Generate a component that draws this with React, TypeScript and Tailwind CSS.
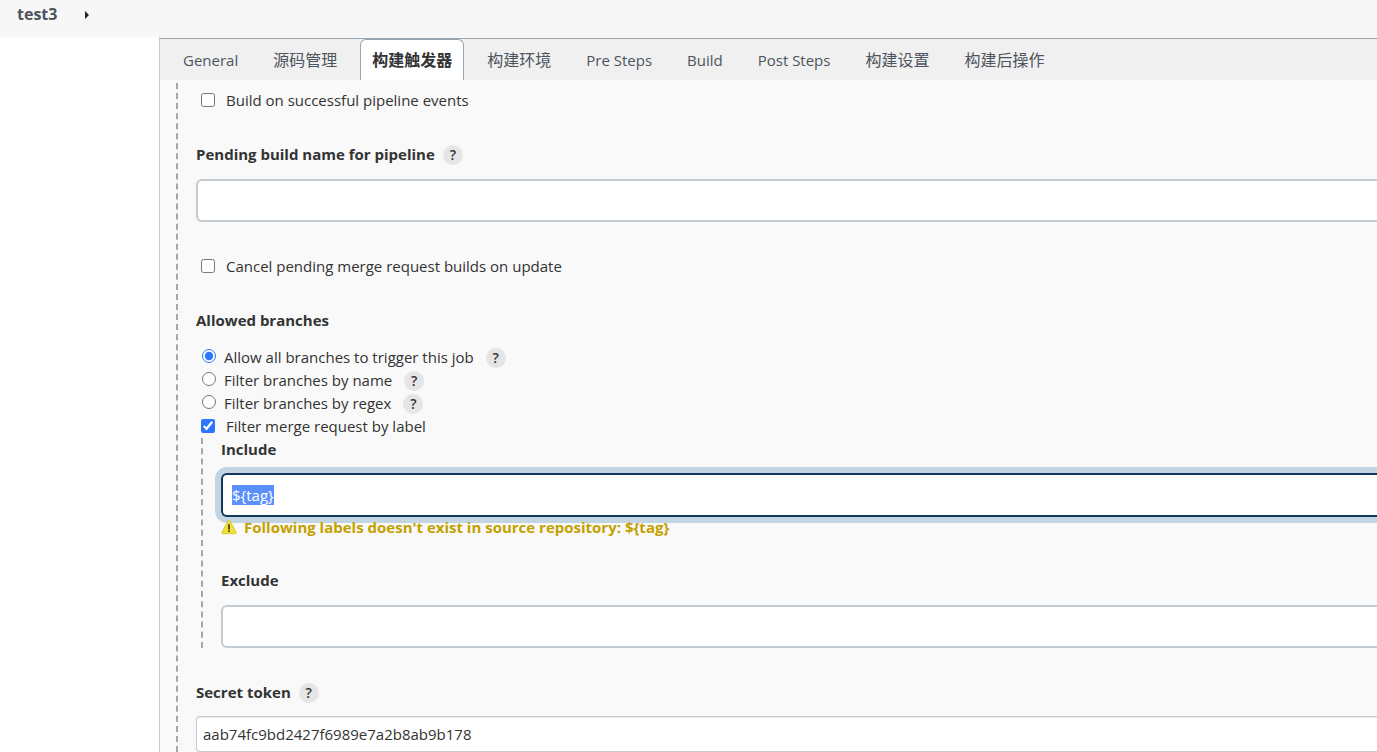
import { useEffect, useRef, useState } from "react";
import clsx from "clsx";

const tabs = [
  "General",
  "源码管理",
  "构建触发器",
  "构建环境",
  "Pre Steps",
  "Build",
  "Post Steps",
  "构建设置",
  "构建后操作",
];

const branchFilters = [
  { id: "all", label: "Allow all branches to trigger this job" },
  { id: "name", label: "Filter branches by name" },
  { id: "regex", label: "Filter branches by regex" },
];

const fieldClass =
  "block w-full rounded-l-md border-2 border-r-0 border-[#c3cad0] bg-white px-2 outline-none";

function Help({ topic }: { topic: string }) {
  return (
    <button
      type="button"
      aria-label={`Help for ${topic}`}
      className="flex size-5 items-center justify-center rounded-full bg-[#e5e5e5] text-[14px] leading-5 font-semibold text-[#333333]"
    >
      ?
    </button>
  );
}

function CheckRow({
  id,
  label,
  defaultChecked,
}: {
  id: string;
  label: string;
  defaultChecked?: boolean;
}) {
  return (
    <div className="flex h-[23px] items-center pl-[5px] font-medium">
      <input
        id={id}
        type="checkbox"
        defaultChecked={defaultChecked}
        className="mr-[11px] mb-0.5 size-[14px] accent-[#2f76ff]"
      />
      <label htmlFor={id}>{label}</label>
    </div>
  );
}

function FieldLabel({
  htmlFor,
  text,
  help,
}: {
  htmlFor: string;
  text: string;
  help?: boolean;
}) {
  return (
    <div className="flex h-[23px] items-center gap-2 font-bold">
      <label htmlFor={htmlFor}>{text}</label>
      {help && <Help topic={text} />}
    </div>
  );
}

function WarningIcon() {
  return (
    <svg viewBox="0 0 16 16" className="size-4 shrink-0" aria-hidden="true">
      <path
        d="M8 1.4c.5 0 .8.3 1 .7l6 11c.5.9.1 1.6-.9 1.6H1.9c-1 0-1.4-.7-.9-1.6l6-11c.2-.4.5-.7 1-.7z"
        fill="#f2e130"
        stroke="#dcc936"
        strokeWidth="1"
      />
      <path d="M8 6v4" stroke="#4a4618" strokeWidth="1.8" strokeLinecap="round" />
      <circle cx="8" cy="12.2" r="1" fill="#4a4618" />
    </svg>
  );
}

export default function App() {
  const [active, setActive] = useState(2);
  const includeRef = useRef<HTMLInputElement>(null);

  useEffect(() => {
    includeRef.current?.focus();
    includeRef.current?.select();
  }, []);

  return (
    <div className="flex min-h-screen flex-col overflow-x-hidden bg-white font-['Open_Sans','Noto_Sans_CJK_SC',sans-serif] text-[15px] leading-[23px] text-[#333333]">
      <header className="flex h-[37px] items-center gap-7 bg-[#f7f7f7] px-[17px] pb-2">
        <a href="#test3" className="text-[16px] font-bold text-[#4d545d]">
          test3
        </a>
        <button type="button" aria-label="Show submenu">
          <svg viewBox="0 0 4 8" className="h-2 w-1" aria-hidden="true">
            <path d="M0 0l4 4-4 4z" fill="#222222" />
          </svg>
        </button>
      </header>

      <div className="flex flex-1">
        <aside className="w-[159px] shrink-0" />
        <main className="min-w-0 flex-1 border-l border-[#c3cad0] bg-[#f9f9f9] pt-px">
          <nav className="flex h-[42px] gap-[11px] border-t border-[#98a4ae] bg-[#f0f0f0] pl-[11px]">
            {tabs.map((tab, i) => (
              <button
                key={tab}
                type="button"
                onClick={() => setActive(i)}
                className={clsx(
                  "rounded-t-md border border-b-0 px-[11px] whitespace-nowrap",
                  /[a-z]/.test(tab) ? "text-[15px]" : "text-[16px]",
                  i === active
                    ? "border-[#98a4ae] bg-white font-bold text-[#333333]"
                    : "border-transparent text-[#4d545d]",
                )}
              >
                {tab}
              </button>
            ))}
          </nav>

          <form className="pt-[3px] pl-4">
            <div className="border-l-2 border-dashed border-[#a6a6a6] pt-1.5 pl-[18px]">
              <CheckRow id="pipeline-events" label="Build on successful pipeline events" />

              <div className="mt-[31px]">
                <FieldLabel htmlFor="pending-name" text="Pending build name for pipeline" help />
                <input id="pending-name" type="text" className={clsx(fieldClass, "mt-[13px] h-[43px]")} />
              </div>

              <div className="mt-[33px]">
                <CheckRow id="cancel-pending" label="Cancel pending merge request builds on update" />
              </div>

              <fieldset className="mt-[31px]">
                <legend className="font-bold">Allowed branches</legend>
                <div className="mt-[14px]">
                  {branchFilters.map(({ id, label }, i) => (
                    <div key={id} className="flex h-[23px] items-center pl-[6px]">
                      <input
                        id={`branch-${id}`}
                        type="radio"
                        name="branches"
                        defaultChecked={i === 0}
                        className="mr-2 mb-[3px] size-[14px] accent-[#2f76ff]"
                      />
                      <label htmlFor={`branch-${id}`} className="mr-3">
                        {label}
                      </label>
                      <Help topic={label} />
                    </div>
                  ))}
                </div>
              </fieldset>

              <CheckRow id="label-filter" label="Filter merge request by label" defaultChecked />

              <div className="ml-[5px] border-l-2 border-dashed border-[#a6a6a6] pl-[18px]">
                <FieldLabel htmlFor="include" text="Include" />
                <input
                  ref={includeRef}
                  id="include"
                  type="text"
                  defaultValue="${tag}"
                  className="mt-3 block h-[44px] w-full rounded-l-md border-2 border-r-0 border-[#c3cad0] bg-white px-[9px] outline-none selection:bg-[#5b8ffc] selection:text-white focus:border-[#12395b] focus:ring-6 focus:ring-[#c3d5e2]"
                />
                <p className="relative mb-8 flex h-5 items-center gap-[7px] font-bold text-[#c4a000]">
                  <WarningIcon />
                  {"Following labels doesn't exist in source repository: ${tag}"}
                </p>
                <FieldLabel htmlFor="exclude" text="Exclude" />
                <input id="exclude" type="text" className={clsx(fieldClass, "mt-[13px] h-[43px]")} />
              </div>

              <div className="mt-[33px]">
                <FieldLabel htmlFor="secret-token" text="Secret token" help />
                <input
                  id="secret-token"
                  type="text"
                  defaultValue="aab74fc9bd2427f6989e7a2b8ab9b178"
                  className="mt-3 block h-9 w-full rounded-l-sm border border-r-0 border-[#c3cad0] bg-white px-1.5 shadow-[inset_0_1px_1px_rgba(0,0,0,0.075)] outline-none"
                />
              </div>
            </div>
          </form>
        </main>
      </div>
    </div>
  );
}
